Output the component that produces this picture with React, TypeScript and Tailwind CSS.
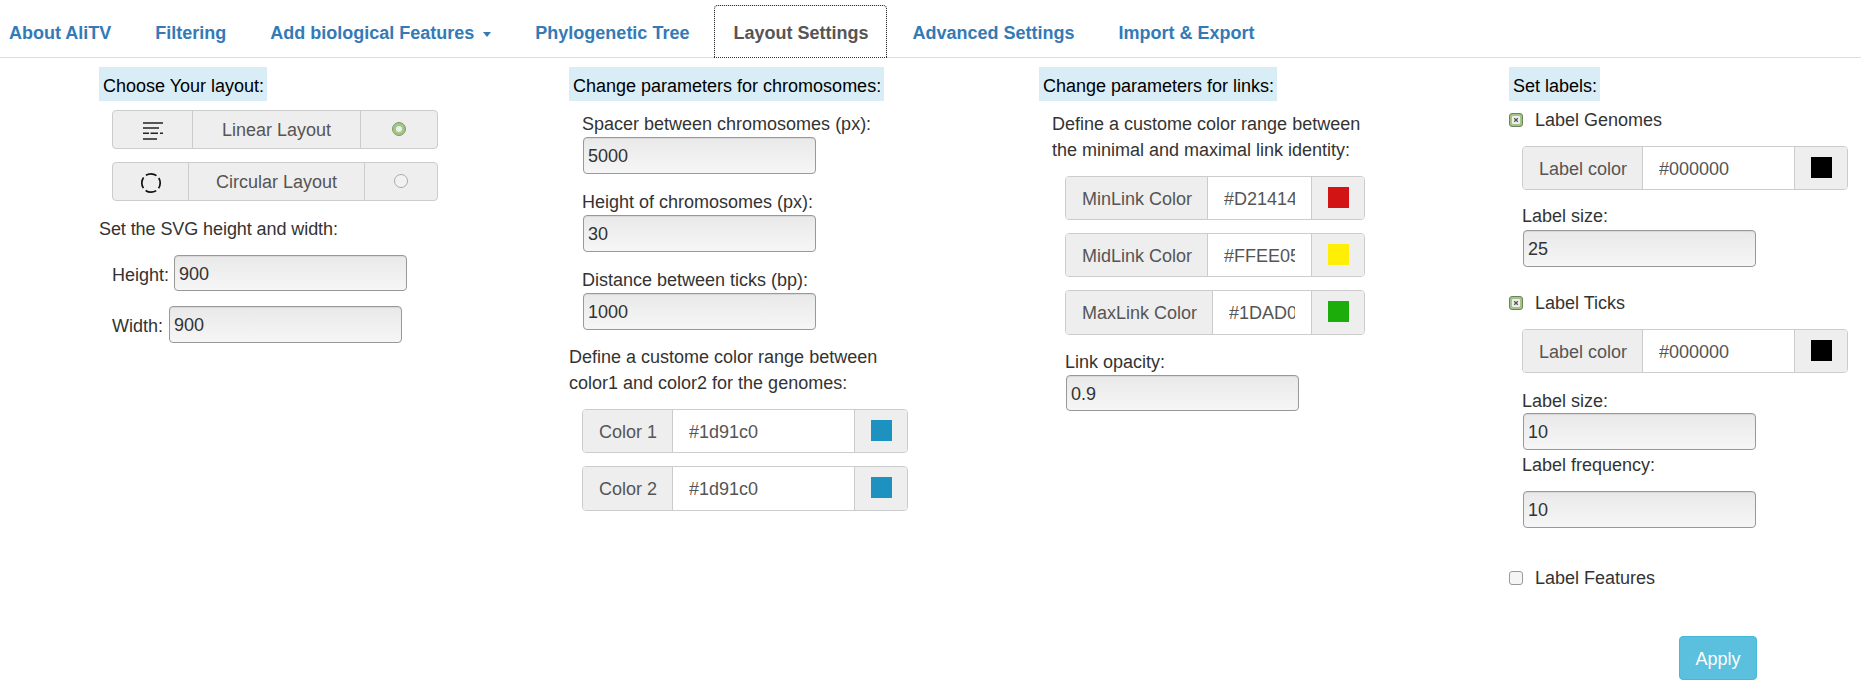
import type { ReactNode } from 'react';

const tabs = ['About AliTV', 'Filtering', 'Add biological Features', 'Phylogenetic Tree', 'Layout Settings', 'Advanced Settings', 'Import & Export'];

function Heading({ className = '', children }: { className?: string; children: ReactNode }) {
  return <div className={`h-[34px] w-fit bg-[#d9edf7] pl-1 pr-[3px] pt-1 leading-[30px] whitespace-nowrap text-black ${className}`}>{children}</div>;
}

function Label({ className, children }: { className: string; children: ReactNode }) {
  return <div className={`leading-[26px] text-[#333] ${className}`}>{children}</div>;
}

function TextField({ value, className }: { value: string; className: string }) {
  return (
    <input
      readOnly
      value={value}
      className={`block rounded border border-[#999] bg-gradient-to-b from-[#e9e9e9] to-[#f6f6f6] px-1 pt-0.5 text-[#333] shadow-[inset_0_1px_1px_rgba(0,0,0,0.075)] outline-none ${className}`}
    />
  );
}

function ColorGroup({ label, value, color, labelWidth, className }: { label: string; value: string; color: string; labelWidth: string; className: string }) {
  return (
    <div className={`flex rounded border border-[#ccc] ${className}`}>
      <span className={`flex shrink-0 items-center rounded-l-[3px] border-r border-[#ccc] bg-[#eee] pl-4 pt-0.5 text-[#555] ${labelWidth}`}>{label}</span>
      <input readOnly value={value} className="w-0 min-w-0 flex-1 bg-white px-4 pt-0.5 text-[#555] outline-none" />
      <span className="flex w-[53px] shrink-0 items-center justify-center rounded-r-[3px] border-l border-[#ccc] bg-[#eee] pb-0.5">
        <span className={`block size-[21px] ${color}`} />
      </span>
    </div>
  );
}

function Radio({ checked }: { checked: boolean }) {
  if (checked) {
    return (
      <span className="flex size-[14px] items-center justify-center rounded-full border border-[#7c9a66] bg-[#a3c585]">
        <span className="block size-[6px] rounded-full bg-[#eee]" />
      </span>
    );
  }
  return <span className="block size-[14px] rounded-full border border-[#aaa] bg-[#f2f2f2]" />;
}

function LayoutGroup({ icon, label, leftWidth, rightWidth, checked, className }: { icon: ReactNode; label: string; leftWidth: string; rightWidth: string; checked: boolean; className: string }) {
  return (
    <div className={`ml-[13px] flex h-[39px] w-[326px] rounded border border-[#ccc] bg-[#eee] text-[#555] ${className}`}>
      <span className={`flex shrink-0 items-center justify-center border-r border-[#ccc] pt-[3px] ${leftWidth}`}>{icon}</span>
      <span className="flex flex-1 items-center justify-center pt-0.5">{label}</span>
      <span className={`flex shrink-0 items-center justify-center border-l border-[#ccc] pb-0.5 ${rightWidth}`}>
        <Radio checked={checked} />
      </span>
    </div>
  );
}

function CheckRow({ label, checked, className }: { label: string; checked: boolean; className: string }) {
  return (
    <div className={`flex h-[26px] items-center text-[#333] ${className}`}>
      {checked ? (
        <span className="flex size-[14px] items-center justify-center rounded-[3px] border border-[#6f7f62] bg-[#a3c585]">
          <svg viewBox="0 0 8 8" className="size-[8px]">
            <rect width="8" height="8" rx="1" fill="#eee" />
            <path d="M2.2 2.2l3.6 3.6M5.8 2.2L2.2 5.8" stroke="#555" strokeWidth="1.3" />
          </svg>
        </span>
      ) : (
        <span className="block size-[14px] rounded-[3px] border border-[#999] bg-[#f5f5f5]" />
      )}
      <span className="ml-3">{label}</span>
    </div>
  );
}

export default function App() {
  return (
    <div className="h-[697px] overflow-hidden bg-white text-[18px] [font-family:'Liberation_Sans',Arial,sans-serif]">
      <nav className="flex h-[58px] items-end gap-[4px] border-b border-[#ddd] pl-[9px]">
        {tabs.map(tab =>
          tab === 'Layout Settings' ? (
            <span key={tab} className="-mb-px mx-px flex h-[53px] items-center rounded-t border border-[#ddd] border-b-white bg-white px-[18px] pt-1 font-bold text-[#555] outline-1 -outline-offset-1 outline-dotted outline-[#333]">
              {tab}
            </span>
          ) : (
            <span key={tab} className={`flex h-[52px] items-center pt-1 font-bold text-[#337ab7] ${tab === 'About AliTV' ? 'pr-[20px]' : 'px-[20px]'}`}>
              {tab}
              {tab.startsWith('Add') && <span className="ml-[9px] mt-0.5 border-x-[4.5px] border-t-[5px] border-x-transparent border-t-[#337ab7]" />}
            </span>
          ),
        )}
      </nav>
      <main className="grid grid-cols-[470px_470px_470px_auto] pl-[99px] pt-[9px]">
        <section>
          <Heading className="w-[167px]">Choose Your layout:</Heading>
          <LayoutGroup
            className="mt-[9px]"
            leftWidth="w-[80px]"
            rightWidth="w-[77px]"
            checked
            label="Linear Layout"
            icon={
              <svg viewBox="0 0 20 18" className="h-[18px] w-[20px]" stroke="#222" strokeWidth="1.5">
                <path d="M0 1h20M0 6h16M0 11.3h6M7.5 11.3h7.5M17 11.3h3M0 17h14" />
              </svg>
            }
          />
          <LayoutGroup
            className="mt-[13px]"
            leftWidth="w-[76px]"
            rightWidth="w-[73px]"
            checked={false}
            label="Circular Layout"
            icon={
              <svg viewBox="0 0 22 22" className="size-[22px]" fill="none" stroke="#111" strokeWidth="1.7">
                <circle cx="11" cy="11" r="9.2" strokeDasharray="11.2 3.25" strokeDashoffset="5.6" />
              </svg>
            }
          />
          <Label className="mt-[15px] tracking-[-0.08px]">Set the SVG height and width:</Label>
          <div className="ml-[13px] mt-[13px] flex text-[#333]">
            <span className="self-center pt-1">Height:</span>
            <TextField value="900" className="ml-[5px] h-[36px] w-[233px]" />
          </div>
          <div className="ml-[13px] mt-[15px] flex text-[#333]">
            <span className="self-center pt-1">Width:</span>
            <TextField value="900" className="ml-[6px] h-[37px] w-[233px]" />
          </div>
        </section>

        <section>
          <Heading>Change parameters for chromosomes:</Heading>
          <Label className="ml-[13px] mt-[10px]">Spacer between chromosomes (px):</Label>
          <TextField value="5000" className="ml-[14px] h-[37px] w-[233px]" />
          <Label className="ml-[13px] mt-[15px]">Height of chromosomes (px):</Label>
          <TextField value="30" className="ml-[14px] h-[37px] w-[233px]" />
          <Label className="ml-[13px] mt-[15px]">Distance between ticks (bp):</Label>
          <TextField value="1000" className="ml-[14px] h-[37px] w-[233px]" />
          <Label className="mt-[14px]">
            Define a custome color range between
            <br />
            color1 and color2 for the genomes:
          </Label>
          <ColorGroup className="ml-[13px] mt-[13px] h-[44px] w-[326px]" labelWidth="w-[90px]" label="Color 1" value="#1d91c0" color="bg-[#1d91c0]" />
          <ColorGroup className="ml-[13px] mt-[13px] h-[45px] w-[326px]" labelWidth="w-[90px]" label="Color 2" value="#1d91c0" color="bg-[#1d91c0]" />
        </section>

        <section>
          <Heading>Change parameters for links:</Heading>
          <Label className="ml-[13px] mt-[10px]">
            Define a custome color range between
            <br />
            the minimal and maximal link identity:
          </Label>
          <ColorGroup className="ml-[26px] mt-[13px] h-[44px] w-[300px]" labelWidth="w-[142px]" label="MinLink Color" value="#D21414" color="bg-[#d21414]" />
          <ColorGroup className="ml-[26px] mt-[13px] h-[44px] w-[300px]" labelWidth="w-[142px]" label="MidLink Color" value="#FFEE05" color="bg-[#ffee05]" />
          <ColorGroup className="ml-[26px] mt-[13px] h-[45px] w-[300px]" labelWidth="w-[147px]" label="MaxLink Color" value="#1DAD0A" color="bg-[#1dad0a]" />
          <Label className="ml-[26px] mt-[14px]">Link opacity:</Label>
          <TextField value="0.9" className="ml-[27px] h-[36px] w-[233px]" />
        </section>

        <section>
          <Heading>Set labels:</Heading>
          <CheckRow className="mt-[6px]" label="Label Genomes" checked />
          <ColorGroup className="ml-[13px] mt-[13px] h-[44px] w-[326px]" labelWidth="w-[120px]" label="Label color" value="#000000" color="bg-black" />
          <Label className="ml-[13px] mt-[13px]">Label size:</Label>
          <TextField value="25" className="ml-[14px] mt-px h-[37px] w-[233px]" />
          <CheckRow className="mt-[23px]" label="Label Ticks" checked />
          <ColorGroup className="ml-[13px] mt-[13px] h-[44px] w-[326px]" labelWidth="w-[120px]" label="Label color" value="#000000" color="bg-black" />
          <Label className="ml-[13px] mt-[15px]">Label size:</Label>
          <TextField value="10" className="-mt-px ml-[14px] h-[37px] w-[233px]" />
          <Label className="ml-[13px] mt-[2px]">Label frequency:</Label>
          <TextField value="10" className="ml-[14px] mt-[13px] h-[37px] w-[233px]" />
          <CheckRow className="mt-[37px]" label="Label Features" checked={false} />
          <button className="ml-[170px] mt-[45px] block h-[44px] w-[78px] rounded border border-[#46b8da] bg-[#5bc0de] pt-0.5 text-white">Apply</button>
        </section>
      </main>
    </div>
  );
}
